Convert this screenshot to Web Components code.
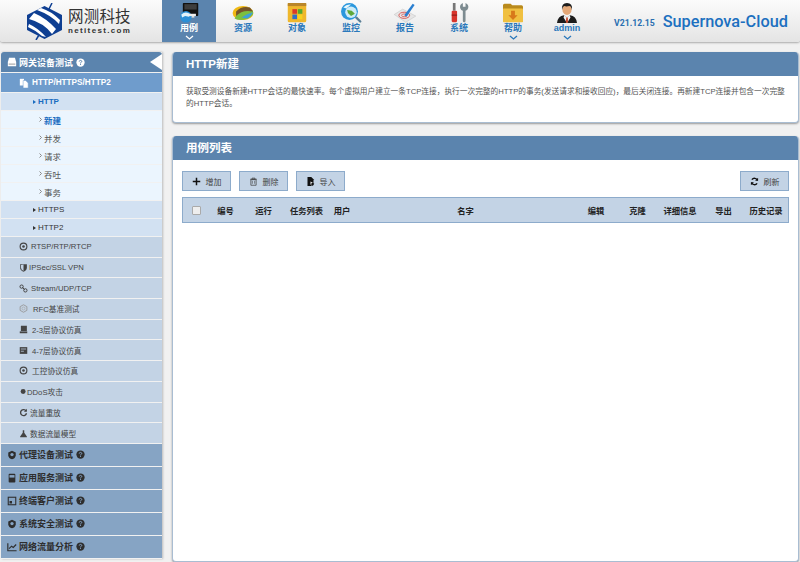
<!DOCTYPE html>
<html lang="zh">
<head>
<meta charset="utf-8">
<title>Supernova-Cloud</title>
<style>
html, body { margin: 0; height: 100%; overflow: hidden; }
body {
    background: #f1f1f1; color: #333;
    font: 9px "Liberation Sans", "Noto Sans CJK SC", sans-serif;
    display: flex; flex-direction: column; height: 562px;
}
main-area { flex: 1; }
</style>
</head>
<body>
<app-header></app-header>
<main-area>
    <side-menu slot="side"></side-menu>
    <case-page></case-page>
</main-area>

<script>
// icons of the top bar, 30x26 box
const NAV_ICONS = {
    case: `<rect x="7" y="0" width="20" height="17" rx="1" fill="#111"/><rect x="9" y="1.500" width="16" height="7" fill="#3d3d3d"/><rect x="16" y="16" width="6" height="3" fill="#ddd"/><circle cx="11" cy="18" r="7.500" fill="#2b8fd6"/><path d="M5 15q6-5 12 0l-2 3-5-1-4 2z" fill="#dff2fb"/><rect x="14" y="14" width="10" height="3" fill="#eee"/>`,
    res: `<ellipse cx="15" cy="13" rx="13.500" ry="9" fill="#f0b912"/><path d="M4 20q5-11 23-11 2 3 1 6-6 7-15 7-6 0-9-2z" fill="#7cbf3f"/><path d="M6 11q8-8 18-5l4 5Q14 8 6 17z" fill="#75552a"/><path d="M13 19q6-5 15-7-2 5-7 8z" fill="#3f9fd8"/>`,
    obj: `<rect x="3" y="0" width="24" height="25" rx="2" fill="#efb72c"/><rect x="3" y="0" width="24" height="4" fill="#b9862a"/><rect x="9" y="8" width="6" height="6" fill="#d93a2a"/><rect x="16" y="8" width="6" height="6" fill="#53a92e"/><rect x="9" y="15" width="6" height="6" fill="#2f6fc9"/><rect x="16" y="15" width="6" height="6" fill="#f5d21f"/>`,
    mon: `<circle cx="13" cy="11" r="11" fill="#2a97dd"/><circle cx="15" cy="12" r="7.500" fill="#cdebf6"/><path d="M10 9l6 1 4 4-5 3-4-4z" fill="#5fa83a"/><path d="M5 6q4-5 10-4l-6 5z" fill="#e6f6fc"/><path d="M22 19l5 5" stroke="#5c7f96" stroke-width="3" stroke-linecap="round"/>`,
    rep: `<path d="M1 15l11-7 17 9-13 8z" fill="#e6e6e6" stroke="#bbb" stroke-width=".6"/><ellipse cx="14" cy="16" rx="7" ry="4" fill="none" stroke="#d9534f" stroke-width="1.200"/><ellipse cx="14" cy="16" rx="3.500" ry="1.800" fill="none" stroke="#d9534f"/><path d="M14 16L25 1l2.500 1.500L17 18z" fill="#2a7fd0"/>`,
    sys: `<rect x="7" y="0" width="3.500" height="10" fill="#777"/><rect x="5.500" y="10" width="7" height="15" rx="1.500" fill="#d8342c"/><rect x="5.500" y="15" width="7" height="1.500" fill="#8d1c18"/><path d="M20 0v5h3.500V0q4.500 2 3.500 6.500-1 3.500-3.500 3.500v13q0 2-1.750 2T20 23V10q-2.500 0-3.500-3.500Q15.500 2 20 0z" fill="#7d8b90"/>`,
    help: `<path d="M2 3q0-2 2-2h8l2 2h12q2 0 2 2v19H2z" fill="#b98a1c"/><rect x="2" y="7" width="26" height="18" rx="1" fill="#f0c040"/><path d="M12.500 10h5v6h3.500L15 22l-6-6h3.500z" fill="#d8791a"/>`,
    user: `<path d="M2 26q1-9 9-10l4 3 4-3q8 1 9 10z" fill="#1c1c1c"/><path d="M11.500 16l3.500 3 3.500-3 1 3-4.500 7-4.500-7z" fill="#f2f2f2"/><path d="M14 19h2l.5 6-1.500 1-1.500-1z" fill="#c9482a"/><ellipse cx="15" cy="8.500" rx="6" ry="7" fill="#e4a878"/><path d="M8.500 9q-1-9 6.500-9t6.500 9q-1-5-3.500-5-4 1-6.500 0-2.500 1-3 5z" fill="#1b1b1b"/>`
};

class NavItem extends HTMLElement {
    connectedCallback() {
        const drop = this.hasAttribute('drop') || this.hasAttribute('active');
        this.attachShadow({mode: 'open'}).innerHTML = `
        <style>
            :host { display: flex; flex-direction: column; align-items: center; width: 54px; height: 42px; box-sizing: border-box; padding-top: 3px; color: #2a78bb; font-weight: 700; font-size: 9px; line-height: 11px; }
            :host([active]) { background: #5b84ae; color: #fff; }
            .ico { display: block; width: 30px; height: 20px; flex: none; }
            .drop { display: block; width: 9px; height: 5px; margin: 1px 0 0; flex: none; }
        </style>
        <svg class="ico" viewBox="0 0 30 26">${NAV_ICONS[this.getAttribute('icon')]}</svg>
        <span>${this.getAttribute('label')}</span>
        ${drop ? `<svg class="drop" viewBox="0 0 9 5"><path d="M1 1l3.500 3L8 1" fill="none" stroke="currentColor" stroke-width="1.300"/></svg>` : ''}`;
    }
}
customElements.define('nav-item', NavItem);

class AppHeader extends HTMLElement {
    connectedCallback() {
        this.attachShadow({mode: 'open'}).innerHTML = `
        <style>
            :host { display: flex; height: 42px; flex: none; background: linear-gradient(#fbfbfb, #e4e4e4); box-shadow: 0 1px 2px #aaa; border-radius: 0 0 3px 3px; }
            .logo { width: 162px; box-sizing: border-box; padding-left: 26px; display: flex; align-items: center; gap: 5px; }
            .logo svg { width: 37px; height: 37px; flex: none; }
            .name { font-size: 15.500px; line-height: 18px; color: #333; letter-spacing: .2px; white-space: nowrap; }
            .site { font-size: 8px; line-height: 9px; font-weight: 700; letter-spacing: 1.350px; color: #333; }
            .nav { display: flex; }
            .ver { margin-left: 20px; align-self: center; font-size: 8.700px; font-weight: 700; color: #2a6fb0; font-family: Roboto, "Liberation Sans", sans-serif; padding-top: 3px; white-space: nowrap; }
            .brand { margin-left: 8px; align-self: center; font-size: 16.300px; font-weight: 500; color: #1c70c0; font-family: Roboto, "Liberation Sans", sans-serif; white-space: nowrap; }
        </style>
        <div class="logo">
            <svg viewBox="0 0 37 37">
                <path d="M18.500 3L36 12v15l-17.500 9L1 27V12z" fill="#0f3f92"/>
                <path d="M8 10q12 5 22 16l-4 5Q18 20 3 16z" fill="#fff"/>
                <path d="M15 5q10 3 19 12l-1 4Q25 12 11 7z" fill="#fff"/>
                <path d="M3 21q9 4 17 13l-4-1Q9 27 2 24z" fill="#fff"/>
                <path d="M26 0l-3 6M10 37l3-5" stroke="#0f3f92" stroke-width="1.500"/>
            </svg>
            <div><div class="name">网测科技</div><div class="site">netitest.com</div></div>
        </div>
        <div class="nav">
            <nav-item label="用例" icon="case" active></nav-item>
            <nav-item label="资源" icon="res"></nav-item>
            <nav-item label="对象" icon="obj"></nav-item>
            <nav-item label="监控" icon="mon"></nav-item>
            <nav-item label="报告" icon="rep"></nav-item>
            <nav-item label="系统" icon="sys"></nav-item>
            <nav-item label="帮助" icon="help" drop></nav-item>
            <nav-item label="admin" icon="user" drop></nav-item>
        </div>
        <div class="ver">V21.12.15</div>
        <div class="brand">Supernova-Cloud</div>`;
    }
}
customElements.define('app-header', AppHeader);

// small glyphs of the side menu
const SIDE_ICONS = {
    hdd: `<path d="M1 6l1.500-5h7L11 6v5H1z" fill="currentColor"/><rect x="2" y="8" width="8" height="1" fill="#888"/>`,
    file: `<path d="M1 1h5v8H1z" fill="currentColor"/><path d="M5 3h3l3 3v6H5z" fill="currentColor" stroke="#6f9ccc" stroke-width=".6"/>`,
    disc: `<circle cx="6" cy="6" r="4.500" fill="none" stroke="currentColor" stroke-width="1.500"/><circle cx="6" cy="6" r="1.700" fill="currentColor"/>`,
    shield: `<path d="M1.500 1.500h9V6q0 4-4.500 5.500Q1.500 10 1.500 6z" fill="currentColor"/><path d="M6 2v8.500Q2.500 9 2.500 6V2.500z" fill="#c3d3e5"/>`,
    link: `<circle cx="3.500" cy="3.500" r="2.200" fill="none" stroke="currentColor" stroke-width="1.300"/><circle cx="8.500" cy="8.500" r="2.200" fill="none" stroke="currentColor" stroke-width="1.300"/><path d="M4.500 4.500l3 3" stroke="currentColor" stroke-width="1.300"/>`,
    gear: `<path d="M6 1l4.500 2.500v5L6 11 1.500 8.500v-5z" fill="none" stroke="#999" stroke-width="1.200"/><circle cx="6" cy="6" r="2" fill="none" stroke="#aaa"/>`,
    stack: `<path d="M2.500 1h8v7h-8z" fill="currentColor"/><path d="M1 8.500h10V11H1z" fill="currentColor"/>`,
    server: `<rect x="1" y="1.500" width="10" height="9" fill="currentColor"/><path d="M2.500 4h7M2.500 7h4" stroke="#c3d3e5"/>`,
    dot: `<circle cx="5.500" cy="6" r="3.300" fill="currentColor"/>`,
    redo: `<path d="M9.500 4A4 4 0 1 0 10 7" fill="none" stroke="currentColor" stroke-width="1.800"/><path d="M10.500 1v4h-4z" fill="currentColor"/>`,
    flask: `<path d="M5 1.500h2V5l3.500 5v1h-9v-1L5 5z" fill="currentColor"/>`,
    badge: `<path d="M6 1l4.500 2v3.500Q10 10 6 11 2 10 1.500 6.500V3z" fill="currentColor"/><circle cx="6" cy="5.500" r="2" fill="#86a4c4"/>`,
    tablet: `<rect x="2" y="1" width="8" height="10.500" rx="1" fill="currentColor"/><rect x="3" y="2.500" width="6" height="3" fill="#86a4c4"/>`,
    frame: `<rect x="1.500" y="1.500" width="9" height="9" fill="none" stroke="currentColor" stroke-width="1.300"/><rect x="3" y="6" width="3" height="3" fill="currentColor"/>`,
    chart: `<path d="M1 1.500V10.500H11.500" fill="none" stroke="currentColor" stroke-width="1.400"/><path d="M2.500 8l3-3 2 1.500L11 3" fill="none" stroke="currentColor" stroke-width="1.400"/>`,
    help: `<circle cx="6" cy="6" r="5.500" fill="currentColor"/><path d="M4.300 4.800Q4.500 3.200 6 3.200t1.700 1.400Q7.700 5.600 6 6.400v.6" fill="none" stroke="var(--qmark,#fff)" stroke-width="1.300"/><rect x="5.300" y="7.800" width="1.400" height="1.400" fill="var(--qmark,#fff)"/>`
};
const glyph = name => `<svg class="g" viewBox="0 0 12 12">${SIDE_ICONS[name]}</svg>`;

class SideRow extends HTMLElement {
    connectedCallback() {
        const kind = this.getAttribute('kind');
        const icon = this.getAttribute('icon');
        const q = this.hasAttribute('help');
        this.attachShadow({mode: 'open'}).innerHTML = `
        <style>
            :host { display: flex; align-items: center; box-sizing: border-box; white-space: nowrap; margin-bottom: 1px; position: relative; font-size: 8px; }
            :host([kind=top]) { height: 20px; background: #5b84ae; color: #fff; font-weight: 700; padding-left: 6px; font-size: 9px; border-radius: 3px 3px 0 0; --qmark: #5b84ae; --gap: 2px; }
            :host([kind=sub]) { height: 19px; background: #6f9ccc; color: #fff; font-weight: 700; padding-left: 18px; font-size: 8.200px; }
            :host([kind=group]) { height: 17px; background: #d2e1f2; color: #333; padding-left: 32px; }
            :host([kind=item]) { height: 17px; background: #ebf5fe; color: #555; padding-left: 38px; font-size: 8.500px; }
            :host([kind=plain]) { height: 19.700px; background: #c3d3e5; color: #444; padding-left: 18px; font-size: 7.700px; }
            :host([kind=fold]) { height: 22px; background: #86a4c4; color: #2e2e2e; padding-left: 6px; font-size: 9px; font-weight: 700; --qmark: #86a4c4; --gap: 2px; }
            :host([current]) { color: #1a6cc0; font-weight: 700; }
            .g { display: block; flex: none; width: 10px; height: 10px; margin-right: var(--gap, 3px); }
            :host([kind=plain]) .g { width: 9px; height: 9px; }
            .tri { width: 0; height: 0; border-left: 3px solid currentColor; border-top: 2.500px solid transparent; border-bottom: 2.500px solid transparent; margin-right: 2px; }
            .chev { display: block; width: 3px; height: 5px; margin-right: 2px; flex: none; }
            .cut { position: absolute; right: 0; top: 2px; width: 0; height: 0; border-right: 12px solid #fff; border-top: 8px solid transparent; border-bottom: 8px solid transparent; }
            .q { margin-left: 3px; --gap: 0; }
            .q .g { width: 9px; height: 9px; }
        </style>
        ${kind === 'group' ? '<i class="tri"></i>' : ''}
        ${kind === 'item' ? '<svg class="chev" viewBox="0 0 3 5"><path d="M.5.5l2 2-2 2" fill="none" stroke="#888"/></svg>' : ''}
        ${icon ? glyph(icon) : ''}
        <slot></slot>
        ${q ? `<span class="q">${glyph('help')}</span>` : ''}
        ${this.hasAttribute('cut') ? '<i class="cut"></i>' : ''}`;
    }
}
customElements.define('side-row', SideRow);

class SideMenu extends HTMLElement {
    connectedCallback() {
        this.attachShadow({mode: 'open'}).innerHTML = `
        <style>
            :host { display: block; width: 161px; margin-left: 1px; flex: none; box-shadow: 1px 0 2px #bbb; align-self: flex-start; }
        </style>
        <side-row kind="top" icon="hdd" help cut>网关设备测试</side-row>
        <side-row kind="sub" icon="file">HTTP/HTTPS/HTTP2</side-row>
        <side-row kind="group" current>HTTP</side-row>
        <side-row kind="item" current>新建</side-row>
        <side-row kind="item">并发</side-row>
        <side-row kind="item">请求</side-row>
        <side-row kind="item">吞吐</side-row>
        <side-row kind="item">事务</side-row>
        <side-row kind="group">HTTPS</side-row>
        <side-row kind="group">HTTP2</side-row>
        <side-row kind="plain" icon="disc">RTSP/RTP/RTCP</side-row>
        <side-row kind="plain" icon="shield" style="--gap:1px">IPSec/SSL VPN</side-row>
        <side-row kind="plain" icon="link">Stream/UDP/TCP</side-row>
        <side-row kind="plain" icon="gear" style="--gap:5px">RFC基准测试</side-row>
        <side-row kind="plain" icon="stack" style="--gap:4px">2-3层协议仿真</side-row>
        <side-row kind="plain" icon="server" style="--gap:4px">4-7层协议仿真</side-row>
        <side-row kind="plain" icon="disc" style="--gap:4px">工控协议仿真</side-row>
        <side-row kind="plain" icon="dot" style="--gap:-1px">DDoS攻击</side-row>
        <side-row kind="plain" icon="redo" style="--gap:2px">流量重放</side-row>
        <side-row kind="plain" icon="flask" style="--gap:2px">数据流量模型</side-row>
        <side-row kind="fold" icon="badge" help>代理设备测试</side-row>
        <side-row kind="fold" icon="tablet" help>应用服务测试</side-row>
        <side-row kind="fold" icon="frame" help>终端客户测试</side-row>
        <side-row kind="fold" icon="badge" help>系统安全测试</side-row>
        <side-row kind="fold" icon="chart" help>网络流量分析</side-row>`;
    }
}
customElements.define('side-menu', SideMenu);

class PanelBox extends HTMLElement {
    connectedCallback() {
        this.attachShadow({mode: 'open'}).innerHTML = `
        <style>
            :host { display: flex; flex-direction: column; background: #fff; border-radius: 4px; border: 1px solid #a9bdd2; border-top: 0; box-shadow: 0 1px 2px #999; box-sizing: border-box; overflow: hidden; }
            header { height: 24px; flex: none; background: #5b84ae; color: #fff; font-size: 11.500px; font-weight: 700; line-height: 24px; padding-left: 13px; }
            .body { flex: 1; }
        </style>
        <header>${this.getAttribute('heading')}</header>
        <div class="body"><slot></slot></div>`;
    }
}
customElements.define('panel-box', PanelBox);

const BTN_ICONS = {
    plus: `<path d="M5 1h2v4h4v2H7v4H5V7H1V5h4z" fill="#111"/>`,
    trash: `<path d="M2.500 3.500h7v7.500h-7zM4 1.500h4v1.500H4zM1.500 3h9" fill="none" stroke="#444" stroke-width="1"/><path d="M4.500 5v4M7.500 5v4" stroke="#444" stroke-width=".8"/>`,
    imp: `<path d="M2 0h5l3 3v5L7 12H2z" fill="#111"/><path d="M6 6l4 2-3 1 1 2-2-1z" fill="#fff"/><path d="M8 7l3 2-2 3-2-2z" fill="#111"/>`,
    sync: `<path d="M10 4.500A4.300 4.300 0 0 0 2.500 3.500M2 7.500A4.300 4.300 0 0 0 9.500 8.500" fill="none" stroke="#111" stroke-width="1.800"/><path d="M10.800 1v4H6.800zM1.200 11V7h4z" fill="#111"/>`
};

class ToolButton extends HTMLElement {
    connectedCallback() {
        this.attachShadow({mode: 'open'}).innerHTML = `
        <style>
            :host { display: flex; align-items: center; justify-content: center; gap: 5px; width: 49px; height: 20px; box-sizing: border-box; background: #c3d3e5; border: 1px solid #8dabcb; color: #444; font-size: 8px; }
            svg { width: 9px; height: 9px; display: block; }
        </style>
        <svg viewBox="0 0 12 12">${BTN_ICONS[this.getAttribute('icon')]}</svg><slot></slot>`;
    }
}
customElements.define('tool-button', ToolButton);

class CaseTable extends HTMLElement {
    connectedCallback() {
        const cols = ['编号', '运行', '任务列表', '用户', '名字', '编辑', '克隆', '详细信息', '导出', '历史记录'];
        this.attachShadow({mode: 'open'}).innerHTML = `
        <style>
            :host { display: grid; grid-template-columns: 26px 33px 43px 43px 28px 219px 42px 41px 44px 43px 42px; align-items: center; height: 26px; background: #c3d3e5; border: 1px solid #8dabcb; box-sizing: border-box; font-size: 8.300px; font-weight: 700; color: #222; }
            span { text-align: center; white-space: nowrap; }
            .check { justify-self: center; width: 7px; height: 7px; background: #eee; border: 1px solid #aaa; border-radius: 1px; }
        </style>
        <i class="check"></i>
        ${cols.map(c => `<span>${c}</span>`).join('')}`;
    }
}
customElements.define('case-table', CaseTable);

class CasePage extends HTMLElement {
    connectedCallback() {
        this.attachShadow({mode: 'open'}).innerHTML = `
        <style>
            :host { display: flex; flex-direction: column; gap: 13px; flex: 1; min-width: 0; padding-right: 1px; margin-left: 10px; }
            .intro { height: 71px; flex: none; }
            .desc { margin: 0; padding: 10px 13px 0; font-size: 7.700px; line-height: 12px; color: #555; }
            .list { flex: 1; }
            .inner { padding: 11px 9px 0; display: flex; flex-direction: column; gap: 6px; }
            .tools { display: flex; gap: 8px; }
            .tools tool-button:last-child { margin-left: auto; }
        </style>
        <panel-box class="intro" heading="HTTP新建">
            <p class="desc">获取受测设备新建HTTP会话的最快速率。每个虚拟用户建立一条TCP连接，执行一次完整的HTTP的事务(发送请求和接收回应)，最后关闭连接。再新建TCP连接并包含一次完整的HTTP会话。</p>
        </panel-box>
        <panel-box class="list" heading="用例列表">
            <div class="inner">
                <div class="tools">
                    <tool-button icon="plus">增加</tool-button>
                    <tool-button icon="trash">删除</tool-button>
                    <tool-button icon="imp">导入</tool-button>
                    <tool-button icon="sync">刷新</tool-button>
                </div>
                <case-table></case-table>
            </div>
        </panel-box>`;
    }
}
customElements.define('case-page', CasePage);

class MainArea extends HTMLElement {
    connectedCallback() {
        this.attachShadow({mode: 'open'}).innerHTML = `
        <style>
            :host { display: flex; padding-top: 10px; min-height: 0; overflow: hidden; }
        </style>
        <slot name="side"></slot><slot></slot>`;
    }
}
customElements.define('main-area', MainArea);
</script>
</body>
</html>
